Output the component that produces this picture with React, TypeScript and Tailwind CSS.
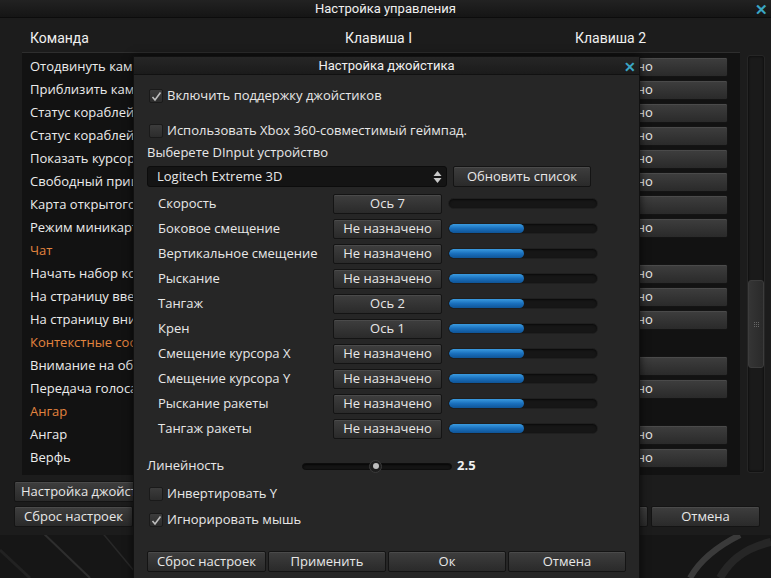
import React from "react";

const F = { fontFamily: '"Open Sans", "Noto Sans", sans-serif' };
const R = { fontFamily: 'Roboto, "Noto Sans", sans-serif' };

function Btn({ children, className = "" }: { children?: React.ReactNode; className?: string }) {
  return (
    <div
      className={
        "h-[20px] rounded-[2px] border border-[#141414] bg-gradient-to-b from-[#3e3e3e] to-[#2a2a2a] shadow-[inset_0_1px_0_rgba(255,255,255,0.07)] flex items-center justify-center text-[13px] text-[#e8e8e8] whitespace-nowrap overflow-hidden " +
        className
      }
    >
      {children}
    </div>
  );
}

function Check({ checked }: { checked: boolean }) {
  return (
    <div className="w-[14px] h-[14px] rounded-[2px] bg-gradient-to-b from-[#3c3c3c] to-[#2c2c2c] border border-[#1a1a1a] flex items-center justify-center">
      {checked && (
        <svg width="11" height="11" viewBox="0 0 11 11">
          <path d="M1.5 6 L4 9 L9.5 1.5" stroke="#bdbdbd" strokeWidth="1.6" fill="none" />
        </svg>
      )}
    </div>
  );
}

function Bar({ fill }: { fill: number }) {
  return (
    <div className="w-[150px] h-[11px] rounded-full bg-[#161616] border border-[#1f1f1f] shadow-[inset_0_1px_2px_rgba(0,0,0,0.6)] overflow-hidden">
      {fill > 0 && (
        <div
          className="h-full rounded-full bg-gradient-to-b from-[#3a9be0] via-[#1a70bd] to-[#0f5496]"
          style={{ width: fill }}
        />
      )}
    </div>
  );
}

const listRows: { t: string; cat?: boolean; v?: string }[] = [
  { t: "Отодвинуть камеру", v: "Не назначено" },
  { t: "Приблизить камеру", v: "Не назначено" },
  { t: "Статус кораблей", v: "Не назначено" },
  { t: "Статус кораблей", v: "Не назначено" },
  { t: "Показать курсор", v: "Не назначено" },
  { t: "Свободный прицел", v: "Не назначено" },
  { t: "Карта открытого мира", v: "" },
  { t: "Режим миникарты", v: "Не назначено" },
  { t: "Чат", cat: true },
  { t: "Начать набор команды", v: "Не назначено" },
  { t: "На страницу вверх", v: "Не назначено" },
  { t: "На страницу вниз", v: "Не назначено" },
  { t: "Контекстные сообщения", cat: true },
  { t: "Внимание на объект", v: "" },
  { t: "Передача голоса", v: "Не назначено" },
  { t: "Ангар", cat: true },
  { t: "Ангар", v: "Не назначено" },
  { t: "Верфь", v: "Не назначено" },
];

const axes: { l: string; b: string; f: number }[] = [
  { l: "Скорость", b: "Ось 7", f: 0 },
  { l: "Боковое смещение", b: "Не назначено", f: 75 },
  { l: "Вертикальное смещение", b: "Не назначено", f: 75 },
  { l: "Рыскание", b: "Не назначено", f: 75 },
  { l: "Тангаж", b: "Ось 2", f: 75 },
  { l: "Крен", b: "Ось 1", f: 75 },
  { l: "Смещение курсора X", b: "Не назначено", f: 75 },
  { l: "Смещение курсора Y", b: "Не назначено", f: 75 },
  { l: "Рыскание ракеты", b: "Не назначено", f: 75 },
  { l: "Тангаж ракеты", b: "Не назначено", f: 75 },
];

export default function App() {
  return (
    <div className="relative w-[771px] h-[578px] overflow-hidden bg-[#101010] text-[#e8e8e8]" style={F}>
      {/* background picture below the window */}
      <svg className="absolute left-0 top-[530px]" width="771" height="48" viewBox="0 0 771 48">
        <rect width="771" height="48" fill="#161616" />
        <path d="M40 0 L90 48" stroke="#2e2e2e" strokeWidth="2" />
        <path d="M100 0 L140 48" stroke="#282828" strokeWidth="1.5" />
        <path d="M0 20 L30 48" stroke="#222" strokeWidth="3" />
        <path d="M690 48 C 700 30, 720 15, 740 5" stroke="#3a3a3a" strokeWidth="6" fill="none" />
        <path d="M720 48 C 730 30, 745 18, 771 12" stroke="#262626" strokeWidth="8" fill="none" />
      </svg>

      {/* main window */}
      <div className="relative w-[771px] h-[535px] bg-[#1c1c1c] flex flex-col">
        <div className="h-[18px] bg-gradient-to-b from-[#222] to-[#151515] border-b border-[#0c0c0c] flex items-center justify-center relative" style={R}>
          <span className="text-[13px] text-[#f0f0f0]">Настройка управления</span>
          <span className="absolute right-[3px] top-[-1px] text-[#3aa6c4] text-[15px] font-bold">✕</span>
        </div>
        <div className="h-[34px] relative text-[14px] text-[#f0f0f0]" style={R}>
          <span className="absolute left-[30px] top-[10px]">Команда</span>
          <span className="absolute left-[345px] top-[10px]">Клавиша I</span>
          <span className="absolute left-[575px] top-[10px]">Клавиша 2</span>
        </div>
        <div className="flex h-[423px]">
          <div className="ml-[22px] w-[718px] bg-[#121212] border-t border-[#2e2e2e] pt-[2px] flex flex-col">
            {listRows.map((r, i) => (
              <div key={i} className="h-[23px] flex items-center">
                <span className={"pl-[8px] w-[240px] text-[13px] whitespace-nowrap overflow-hidden " + (r.cat ? "text-[#e3843f]" : "text-[#ececec]")}>{r.t}</span>
                {!r.cat && (
                  <>
                    <Btn className="ml-[3px] w-[230px] h-[19px]" />
                    <Btn className="ml-[5px] w-[228px] h-[19px] pr-[11px] text-[#cfcfcf]">{r.v}</Btn>
                  </>
                )}
              </div>
            ))}
          </div>
          <div className="ml-[7px] mt-[3px] w-[18px] h-[418px] rounded-[3px] bg-[#1a1a1a] border border-[#262626] shadow-[inset_0_0_3px_rgba(0,0,0,0.8)] flex flex-col items-center pt-[224px]">
            <div className="w-[16px] h-[88px] rounded-[3px] bg-gradient-to-r from-[#353535] to-[#2a2a2a] border border-[#3c3c3c] flex items-center justify-center">
              <div className="grid grid-cols-3 gap-[1px]">
                {Array.from({ length: 9 }).map((_, k) => (
                  <div key={k} className="w-[1px] h-[1px] bg-[#666]" />
                ))}
              </div>
            </div>
          </div>
        </div>
        <div className="flex flex-col pl-[14px] pt-[6px] gap-[4px]">
          <Btn className="w-[170px] h-[21px] justify-start pl-[6px]">Настройка джойстика</Btn>
          <div className="flex items-center">
            <Btn className="w-[119px] h-[21px]">Сброс настроек</Btn>
            <div className="flex-1" />
            <Btn className="w-[110px] h-[21px]">Ок</Btn>
            <Btn className="ml-[3px] w-[109px] h-[21px] mr-[11px]">Отмена</Btn>
          </div>
        </div>
      </div>

      {/* joystick dialog */}
      <div className="absolute left-[133px] top-[56px] w-[507px] h-[530px] bg-[#262626] border border-[#111] shadow-[0_0_8px_rgba(0,0,0,0.7)] flex flex-col">
        <div className="h-[18px] bg-gradient-to-b from-[#262626] to-[#1b1b1b] border-b border-[#111] flex items-center justify-center relative">
          <span className="text-[13px] text-[#f0f0f0]" style={R}>Настройка джойстика</span>
          <span className="absolute right-[3px] top-[-1px] text-[#3aa6c4] text-[14px] font-bold">✕</span>
        </div>
        <div className="pl-[15px] flex flex-col text-[13px]">
          <div className="mt-[11px] h-[20px] flex items-center gap-[4px]">
            <Check checked />
            <span>Включить поддержку джойстиков</span>
          </div>
          <div className="mt-[15px] h-[20px] flex items-center gap-[4px]">
            <Check checked={false} />
            <span>Использовать Xbox 360-совместимый геймпад.</span>
          </div>
          <div className="mt-[4px] h-[16px] flex items-center -ml-[2px]">
            <span>Выберете DInput устройство</span>
          </div>
          <div className="mt-[5px] flex items-center gap-[6px] -ml-[2px]">
            <div className="w-[300px] h-[21px] rounded-[3px] bg-[#141414] border border-[#0c0c0c] flex items-center justify-between pl-[9px] pr-[4px]">
              <span>Logitech Extreme 3D</span>
              <svg width="9" height="14" viewBox="0 0 9 14">
                <path d="M4.5 1 L8.5 6 L0.5 6 Z" fill="#c8c8c8" />
                <path d="M4.5 13 L8.5 8 L0.5 8 Z" fill="#c8c8c8" />
              </svg>
            </div>
            <Btn className="w-[138px] h-[21px]">Обновить список</Btn>
          </div>
          <div className="mt-[4px] flex flex-col pl-[9px]">
            {axes.map((a, i) => (
              <div key={i} className="h-[25px] flex items-center">
                <span className="w-[175px]">{a.l}</span>
                <Btn className="w-[109px]">{a.b}</Btn>
                <div className="ml-[6px]">
                  <Bar fill={a.f} />
                </div>
              </div>
            ))}
          </div>
          <div className="mt-[15px] h-[20px] flex items-center -ml-[2px]">
            <span className="w-[155px]">Линейность</span>
            <div className="relative w-[150px] h-[7px] rounded-full bg-[#141414] border border-[#0d0d0d] shadow-[inset_0_1px_2px_rgba(0,0,0,0.7)]">
              <div className="absolute left-[66px] top-[-4px] w-[13px] h-[13px] rounded-full bg-[#1d1d1d] border border-[#3a3a3a] flex items-center justify-center">
                <div className="w-[6px] h-[6px] rounded-full bg-[#bdbdbd]" />
              </div>
            </div>
            <span className="ml-[5px] font-bold text-[#f0f0f0]">2.5</span>
          </div>
          <div className="mt-[8px] h-[20px] flex items-center gap-[4px]">
            <Check checked={false} />
            <span>Инвертировать Y</span>
          </div>
          <div className="mt-[6px] h-[20px] flex items-center gap-[4px]">
            <Check checked />
            <span>Игнорировать мышь</span>
          </div>
          <div className="mt-[21px] flex gap-[2px] -ml-[2px]">
            <Btn className="w-[119px] h-[21px]">Сброс настроек</Btn>
            <Btn className="w-[118px] h-[21px]">Применить</Btn>
            <Btn className="w-[118px] h-[21px]">Ок</Btn>
            <Btn className="w-[118px] h-[21px]">Отмена</Btn>
          </div>
        </div>
      </div>
    </div>
  );
}
